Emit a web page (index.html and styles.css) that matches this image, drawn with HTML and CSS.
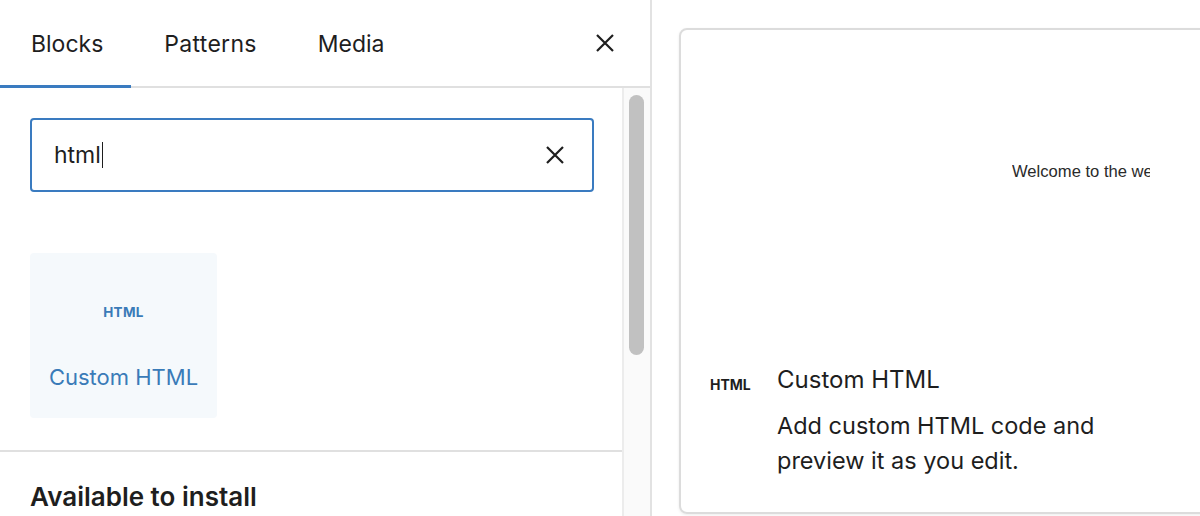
FILE: index.html
```html
<!DOCTYPE html>
<html>
<head>
<meta charset="utf-8">
<link rel="stylesheet" href="styles.css">
</head>
<body>
<div class="app">
  <aside class="inserter">
    <div class="tabs">
      <div class="tab active">Blocks</div>
      <div class="tab">Patterns</div>
      <div class="tab">Media</div>
      <button class="close" aria-label="Close">
        <svg width="24" height="24" viewBox="0 0 24 24"><path d="M4 4L20 20M20 4L4 20" stroke="#1e1e1e" stroke-width="2.2" fill="none"/></svg>
      </button>
    </div>
    <div class="body">
      <div class="content">
        <div class="search">
          <span class="query">html</span><span class="caret"></span>
          <svg class="clear" width="22" height="22" viewBox="0 0 22 22"><path d="M3 3L19 19M19 3L3 19" stroke="#1e1e1e" stroke-width="2.2" fill="none"/></svg>
        </div>
        <div class="grid">
          <div class="block-item">
            <span class="icon-html">HTML</span>
            <span class="item-title">Custom HTML</span>
          </div>
        </div>
        <div class="divider"></div>
        <h2 class="section-title">Available to install</h2>
      </div>
      <div class="scrollbar"><div class="thumb"></div></div>
    </div>
  </aside>
  <main class="preview-area">
    <div class="card">
      <div class="preview">
        <div class="welcome">Welcome to the website</div>
      </div>
      <div class="info">
        <span class="info-icon">HTML</span>
        <div class="info-text">
          <div class="info-title">Custom HTML</div>
          <div class="info-desc">Add custom HTML code and preview it as you edit.</div>
        </div>
      </div>
    </div>
  </main>
</div>
</body>
</html>
```

FILE: styles.css
```css
* { box-sizing: border-box; }
html, body { margin: 0; padding: 0; background: #fff; overflow: hidden; }
body { font-family: Inter, "Noto Sans", sans-serif; color: #1e1e1e; }
.app { display: flex; width: 1200px; height: 516px; overflow: hidden; }

.inserter {
  width: 652px;
  flex: none;
  border-right: 2px solid #e2e2e2;
  display: flex;
  flex-direction: column;
}
.tabs {
  height: 88px;
  flex: none;
  display: flex;
  align-items: stretch;
  border-bottom: 2px solid #e0e0e0;
}
.tab {
  font-size: 23px;
  display: flex;
  align-items: center;
  padding: 3px 30px 0 30px;
  margin-bottom: -2px;
  border-bottom: 3px solid transparent;
  color: #1e1e1e;
}
.tab.active { border-bottom-color: #3a7bc0; padding-left: 31px; padding-right: 28px; }
.tab:nth-child(2) { padding-left: 33px; letter-spacing: 0.3px; }
.tab:nth-child(3) { padding-left: 31px; }
.close {
  margin-left: auto;
  margin-right: 33px;
  align-self: center;
  background: none;
  border: 0;
  padding: 0;
  width: 24px;
  height: 24px;
  display: flex;
}

.body { flex: 1; display: flex; min-height: 0; }
.content { flex: 1; padding: 30px 28px 0 30px; }
.scrollbar {
  width: 28px;
  flex: none;
  background: #fafafa;
  border-left: 2px solid #ececec;
  padding: 7px 5px 0 5px;
}
.thumb { width: 15px; height: 260px; background: #c1c1c1; border-radius: 8px; }

.search {
  height: 74px;
  border: 2px solid #3a7bc0;
  border-radius: 4px;
  display: flex;
  align-items: center;
  padding: 0 26px 0 22px;
}
.query { font-size: 23px; color: #1e1e1e; }
.caret { width: 1.5px; height: 26px; background: #1e1e1e; margin-left: 1px; }
.clear { margin-left: auto; }

.grid { margin-top: 61px; display: flex; }
.block-item {
  width: 187px;
  height: 165px;
  background: #f5f9fc;
  border-radius: 4px;
  display: flex;
  flex-direction: column;
  align-items: center;
  color: #3a7bb8;
}
.icon-html { font-size: 13.5px; font-weight: 700; letter-spacing: 0.3px; margin-top: 51px; }
.item-title { font-size: 22px; margin-top: 44px; }

.divider { height: 2px; background: #e0e0e0; margin: 32px -28px 0 -30px; }
.section-title { font-size: 26px; font-weight: 600; margin: 29px 0 0 0; color: #1e1e1e; }

.preview-area { flex: 1; padding: 28px 0 0 27px; }
.card {
  width: 560px;
  height: 486px;
  border: 2px solid #dcdcdc;
  border-radius: 8px;
  box-shadow: 0 1px 3px rgba(0,0,0,0.08);
  display: flex;
  flex-direction: column;
  overflow: hidden;
}
.preview { height: 320px; position: relative; }
.welcome {
  position: absolute;
  left: 331px;
  top: 132px;
  width: 138px;
  overflow: hidden;
  white-space: nowrap;
  font-family: "Liberation Sans", Arial, sans-serif;
  font-size: 16.6px;
  color: #2a2a2a;
}
.info { display: flex; padding: 15px 0 0 29px; }
.info-icon { font-size: 14px; font-weight: 700; width: 67px; padding-top: 11px; letter-spacing: 0; }
.info-text { width: 360px; }
.info-title { font-size: 24px; }
.info-desc { font-size: 23.5px; line-height: 35px; margin-top: 14px; }
```
